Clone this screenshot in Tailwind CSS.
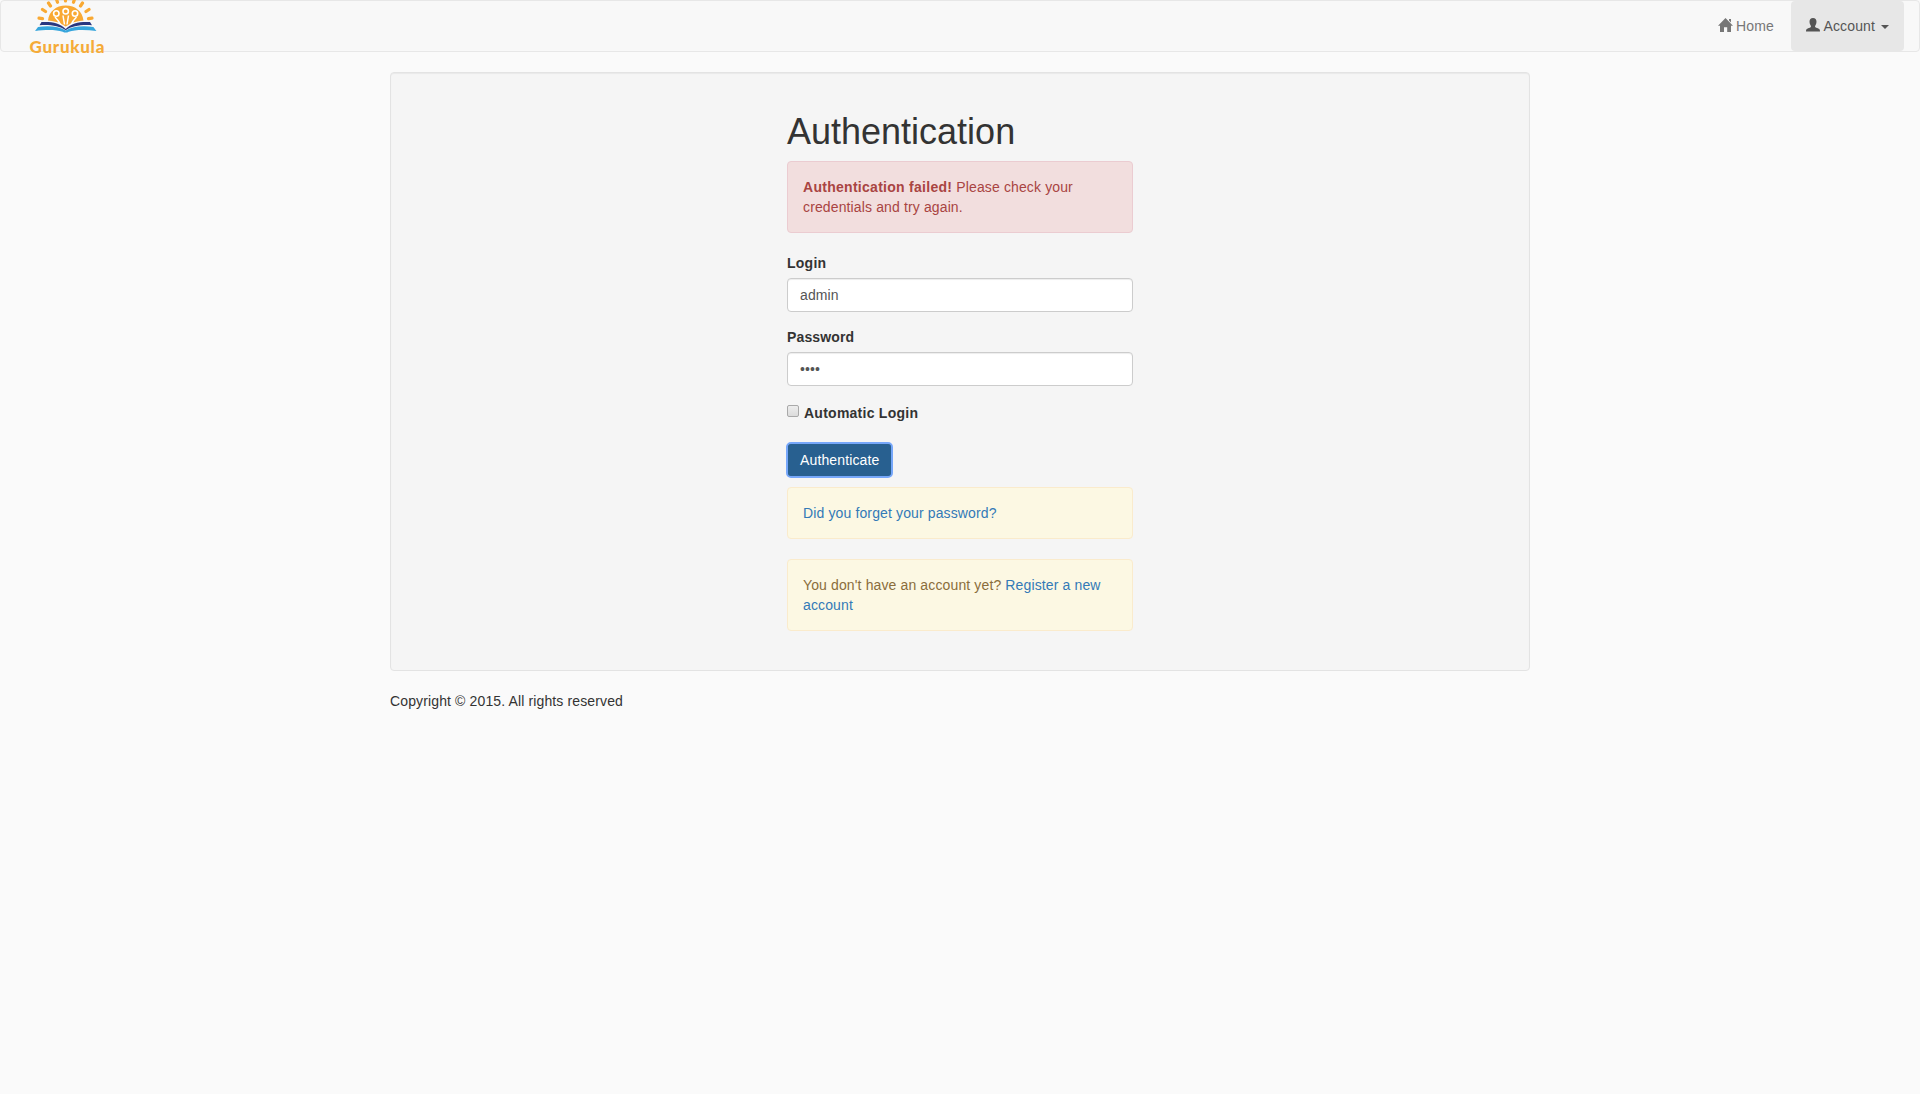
<!DOCTYPE html>
<html lang="en">
<head>
<meta charset="utf-8">
<title>Authentication</title>
<script src="https://cdn.jsdelivr.net/npm/@tailwindcss/browser@4"></script>
</head>
<body class="min-h-screen bg-[#fafafa] font-['Liberation_Sans',Arial,sans-serif] text-[14px] leading-[20px] tracking-[0.13px] text-[#333]">
<nav class="mb-5 flex h-[52px] justify-between rounded border border-[#e7e7e7] bg-[#f8f8f8] pr-[15px] pl-7">
  <a href="#" class="-mt-px block h-[55px] w-[77px]" aria-label="Gurukula">
    <svg class="block" width="77" height="55" viewBox="0 0 77 55">
      <g stroke="#f9a933" stroke-width="3.2" stroke-linecap="round">
        <path d="M13.500 18.700l-3.500-.5M16.500 11.500l-3-2M21.500 6l-2-3M28.500 2.300l-1-3M36.500 1v-3M44.500 2.300l1-3M51.500 6l2-3M57 11.500l3-2M59.500 18.700l3.500-.5"/>
      </g>
      <path d="M19 20.500C20 11.500 27 5.500 36.700 5.500s16.800 6 17.800 15l-4 .4-7 1.600-6.800 4-6.800-4-7-1.600z" fill="#f9a933"/>
      <path d="M26 17c2 2 4 4 5.500 8M34 15.500l1.500 9M39.500 15.500l-1.500 9M47.500 17c-2 2-4 4-5.500 8" fill="none" stroke="#fff" stroke-width="1.500"/>
      <g fill="#f9a933" stroke="#fff" stroke-width="1.600"><circle cx="27.300" cy="13.500" r="2.700"/><circle cx="36.700" cy="11.300" r="2.700"/><circle cx="46" cy="13.500" r="2.700"/></g>
      <path d="M12.500 22c10-.5 18.500.8 24.200 7C42.500 22.800 51 21.500 61 22l2 3.200c-10-.8-20 .5-26.300 5C30.500 25.700 20.500 24.400 10.500 25.200z" fill="#29377f"/>
      <path d="M9 27c11-1.500 21-.5 27.700 3.500C43.400 26.500 53.400 25.500 64.400 27l3 4c-11-1.600-21-1.500-27.700.7-2 1.200-4 1.200-6 0-6.700-2.200-16.700-2.300-27.700-.7z" fill="#36a5dc"/>
      <text x="0.500" y="52.600" textLength="75" lengthAdjust="spacing" class="font-['Lato',sans-serif] text-[17px] font-black" fill="#f5ab38">Gurukula</text>
    </svg>
  </a>
  <ul class="flex text-[#777]">
    <li><a href="#" class="flex h-[50px] items-center pr-[12.5px] pl-[15px]">
      <svg class="mr-[3.5px] -mt-0.5" width="15" height="14" viewBox="0 0 15 14" fill="currentColor"><path d="M7.500 0L15 7.700h-2V14H9.200V9.300H6V14H2V7.700H0L7.500 0zM11 1h2v3.500l-2-2z"/></svg>
      <span>Home&nbsp;</span></a></li>
    <li><a href="#" class="flex h-[50px] items-center rounded bg-[#e7e7e7] px-[15px] text-[#555]">
      <svg class="mr-[4px] -mt-0.5" width="14" height="14" viewBox="0 0 14 14" fill="currentColor"><path d="M7 0c2.300 0 3.500 1.500 3.500 3.700 0 1.200-.3 2.500-1 3.500-.5.700-.7 1.600-.1 2 .8.600 2.700 1 3.800 1.800.6.500.8 1.500.8 2.500H0c0-1 .2-2 .8-2.500 1.100-.8 3-1.200 3.800-1.800.6-.4.4-1.300-.1-2-.7-1-1-2.300-1-3.500C3.500 1.500 4.700 0 7 0z"/></svg>
      <span>Account</span>
      <span class="mt-0.5 ml-[6px] size-0 border-x-4 border-t-4 border-x-transparent border-t-[#555]"></span></a></li>
  </ul>
</nav>
<div class="mx-auto w-[1140px]">
  <main class="mb-5 rounded border border-[#e3e3e3] bg-[#f5f5f5] p-[19px] shadow-[inset_0_1px_1px_rgba(0,0,0,0.05)]">
    <div class="mx-auto w-[346px]">
      <h1 class="mt-5 mb-[10px] text-[36px] leading-[39px] tracking-normal">Authentication</h1>
      <div class="mb-5 rounded border border-[#ebccd1] bg-[#f2dede] p-[15px] text-[#a94442]"><strong class="tracking-[0.28px]">Authentication failed!</strong> Please check your credentials and try again.</div>
      <form>
        <label class="mb-[5px] block font-bold tracking-[0.25px]" for="login">Login</label>
        <input id="login" type="text" value="admin" class="mb-[15px] block h-[34px] w-full rounded border border-[#ccc] bg-white px-3 py-[6px] text-[#555] shadow-[inset_0_1px_1px_rgba(0,0,0,0.075)]">
        <label class="mb-[5px] block font-bold" for="password">Password</label>
        <input id="password" type="password" value="1234" class="mb-[15px] block h-[34px] w-full rounded border border-[#ccc] bg-white px-3 py-[6px] text-[#555] shadow-[inset_0_1px_1px_rgba(0,0,0,0.075)]">
        <label class="mb-5 flex h-[22px] items-end gap-[5px] font-bold tracking-[0.25px]"><input type="checkbox" class="mb-[6px] size-3 appearance-none rounded-[2px] border border-[#a9a9a9] bg-linear-to-b from-[#ededed] to-[#dcdcdc]"><span>Automatic Login</span></label>
        <button type="button" class="mb-[10px] block h-[34px] rounded border border-[#204d74] bg-[#286090] px-3 text-white outline-2 -outline-offset-1 outline-[#76a7fa]">Authenticate</button>
      </form>
      <div class="mb-5 rounded border border-[#faebcc] bg-[#fcf8e3] p-[15px]"><a href="#" class="text-[#337ab7]">Did you forget your password?</a></div>
      <div class="mb-5 rounded border border-[#faebcc] bg-[#fcf8e3] p-[15px] text-[#8a6d3b]">You don't have an account yet? <a href="#" class="text-[#337ab7]">Register a new account</a></div>
    </div>
  </main>
  <footer>Copyright © 2015. All rights reserved</footer>
</div>
</body>
</html>
